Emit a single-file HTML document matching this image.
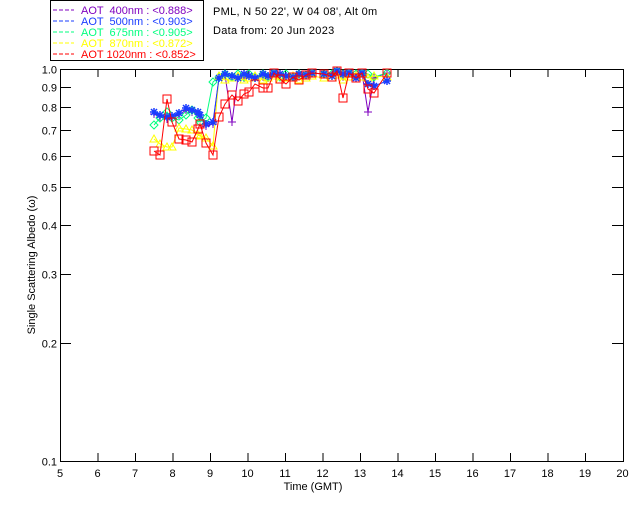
<!DOCTYPE html>
<html><head><style>
body{margin:0;background:#fff;width:640px;height:512px;overflow:hidden}
svg text{font-family:"Liberation Sans",sans-serif;font-size:11px}
</style></head><body>
<svg id="s" width="640" height="512" xmlns="http://www.w3.org/2000/svg">
<rect x="50.5" y="0.5" width="153" height="60" fill="none" stroke="#000"/>
<g font-size="11">
<line x1="53" y1="10" x2="74" y2="10" stroke="#7f00bf" stroke-dasharray="4,2"/><text x="81" y="14" fill="#7f00bf">AOT &#160;400nm : &lt;0.888&gt;</text>
<line x1="53" y1="21" x2="74" y2="21" stroke="#1a3cff" stroke-dasharray="4,2"/><text x="81" y="25" fill="#1a3cff">AOT &#160;500nm : &lt;0.903&gt;</text>
<line x1="53" y1="32" x2="74" y2="32" stroke="#00ff7f" stroke-dasharray="4,2"/><text x="81" y="36" fill="#00ff7f">AOT &#160;675nm : &lt;0.905&gt;</text>
<line x1="53" y1="43" x2="74" y2="43" stroke="#ffff00" stroke-dasharray="4,2"/><text x="81" y="47" fill="#ffff00">AOT &#160;870nm : &lt;0.872&gt;</text>
<line x1="53" y1="54" x2="74" y2="54" stroke="#ff0000" stroke-dasharray="4,2"/><text x="81" y="58" fill="#ff0000">AOT 1020nm : &lt;0.852&gt;</text>
</g>
<text x="213" y="15" letter-spacing="0.3">PML, N 50 22', W 04 08', Alt 0m</text>
<text x="213" y="34" letter-spacing="0.3">Data from: 20 Jun 2023</text>
<g id="ax" stroke="#000" fill="none"><path d="M60.5 69.5V461.5H623.5V69.5Z"/></g>
<g id="lab" text-anchor="end"></g>
<text x="313" y="490" text-anchor="middle">Time (GMT)</text>
<text transform="translate(35,265) rotate(-90)" text-anchor="middle">Single Scattering Albedo (ω)</text>
<g id="d"></g>
</svg>
<script>
var s=document.getElementById('ax'),L=document.getElementById('lab'),ns='http://www.w3.org/2000/svg';
function el(t,a,p){var e=document.createElementNS(ns,t);for(var k in a)e.setAttribute(k,a[k]);(p||s).appendChild(e);return e}
for(var h=6;h<20;h++){var x=60.5+(h-5)*37.5;el('line',{x1:x,y1:461,x2:x,y2:453});el('line',{x1:x,y1:69,x2:x,y2:77});}
for(var h=5;h<=20;h++){var t=el('text',{x:60+(h-5)*37.5,y:477,'text-anchor':'middle',fill:'#000',stroke:'none'},document.getElementById('s'));t.textContent=h;}
var yv=[1,.9,.8,.7,.6,.5,.4,.3,.2,.1];
function Y(v){return 69-392*Math.log10(v)}
yv.forEach(function(v){var y=Math.round(Y(v))+.5;if(v<1&&v>.1){el('line',{x1:60,y1:y,x2:71,y2:y});el('line',{x1:612,y1:y,x2:623,y2:y});}var t=el('text',{x:57,y:y+4,fill:'#000',stroke:'none'},L);t.textContent=v.toFixed(1);});
var red=[[154,151],[160,155],[167,99],[172,122],[179,139],[186,140],[192,142],[198,129],[200,124],[206,143],[213,155],[219,117],[225,104],[232,95],[238,101],[244,94],[249,92],[255,84],[263,88],[268,88],[274,73],[280,79],[286,84],[293,77],[299,80],[306,75],[312,73],[324,74],[332,77],[337,71],[343,98],[349,73],[356,78],[362,73],[368,89],[374,93],[387,73]];
function mod(a,f){return a.map(function(p,i){return [p[0],f(p,i)]})}
var blue=mod(red,function(p,i){return p[0]<215?[112,115,117,116,113,108,110,112,115,118,116][i%11]+(p[0]>200?6:0):Math.min(p[1],74+(i%3)*2)+(p[0]>365?8:0)});
var purp=mod(red,function(p,i){return p[0]<215?blue[i][1]+2:(p[0]==232?122:p[0]==368?112:Math.min(p[1],75+(i%4)))});
var green=mod(red,function(p,i){return p[0]<215?(p[0]==213?82:[125,118,112,118,120,115,110,118,122,118,114][i%11]):Math.min(p[1],74+(i%2)*3)});
var yel=mod(red,function(p,i){return p[0]<215?[139,144,147,147,128,129,130,135,136,138,146][i%11]:Math.min(p[1]+4,80-(i%3)*2)});
var D=document.getElementById('d');
function series(a,c,m){el('polyline',{points:a.map(function(p){return p.join(',')}).join(' '),fill:'none',stroke:c},D);
a.forEach(function(p){var x=p[0],y=p[1];
if(m=='sq')el('rect',{x:x-4,y:y-4,width:8,height:8,fill:'none',stroke:c},D);
else if(m=='tri')el('path',{d:'M'+x+' '+(y-4)+'L'+(x+4)+' '+(y+3)+'L'+(x-4)+' '+(y+3)+'Z',fill:'none',stroke:c},D);
else if(m=='dia')el('path',{d:'M'+x+' '+(y-4)+'L'+(x+4)+' '+y+'L'+x+' '+(y+4)+'L'+(x-4)+' '+y+'Z',fill:'none',stroke:c},D);
else if(m=='plus')el('path',{d:'M'+(x-4)+' '+y+'H'+(x+4)+'M'+x+' '+(y-4)+'V'+(y+4),stroke:c},D);
else el('path',{d:'M'+(x-4)+' '+y+'H'+(x+4)+'M'+x+' '+(y-4)+'V'+(y+4)+'M'+(x-3)+' '+(y-3)+'L'+(x+3)+' '+(y+3)+'M'+(x+3)+' '+(y-3)+'L'+(x-3)+' '+(y+3),stroke:c,'stroke-width':1.5},D);});}
series(purp,'#7f00bf','plus');series(green,'#00ff7f','dia');series(yel,'#ffff00','tri');series(blue,'#1a3cff','ast');series(red,'#ff0000','sq');
</script>
</body></html>
